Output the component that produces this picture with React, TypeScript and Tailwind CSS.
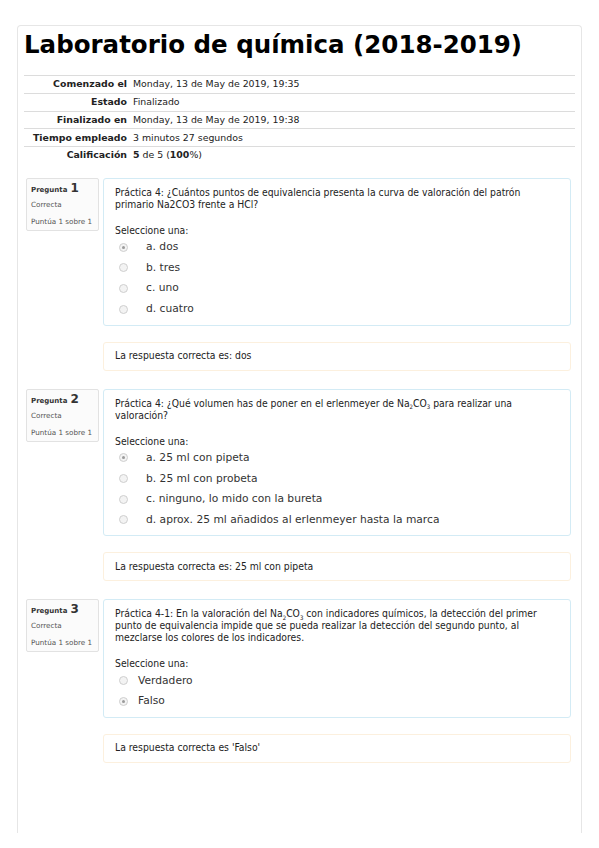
import type { ReactNode } from "react";

type Option = { label: string; checked?: boolean };

interface QuestionData {
  number: number;
  text: ReactNode;
  options: Option[];
  optionGap: string;
  feedback: string;
}

const SUMMARY: { label: string; value: ReactNode }[] = [
  { label: "Comenzado el", value: "Monday, 13 de May de 2019, 19:35" },
  { label: "Estado", value: "Finalizado" },
  { label: "Finalizado en", value: "Monday, 13 de May de 2019, 19:38" },
  { label: "Tiempo empleado", value: "3 minutos 27 segundos" },
  {
    label: "Calificación",
    value: (
      <>
        <b>5</b> de 5 (<b>100</b>%)
      </>
    ),
  },
];

const Na2CO3 = (
  <>
    Na<sub className="text-[6px] leading-none align-[-1px]">2</sub>CO
    <sub className="text-[6px] leading-none align-[-1px]">3</sub>
  </>
);

const QUESTIONS: QuestionData[] = [
  {
    number: 1,
    text: "Práctica 4: ¿Cuántos puntos de equivalencia presenta la curva de valoración del patrón primario Na2CO3 frente a HCl?",
    options: [{ label: "a. dos", checked: true }, { label: "b. tres" }, { label: "c. uno" }, { label: "d. cuatro" }],
    optionGap: "gap-[18px]",
    feedback: "La respuesta correcta es: dos",
  },
  {
    number: 2,
    text: (
      <>
        Práctica 4: ¿Qué volumen has de poner en el erlenmeyer de {Na2CO3} para realizar una valoración?
      </>
    ),
    options: [
      { label: "a. 25 ml con pipeta", checked: true },
      { label: "b. 25 ml con probeta" },
      { label: "c. ninguno, lo mido con la bureta" },
      { label: "d. aprox. 25 ml añadidos al erlenmeyer hasta la marca" },
    ],
    optionGap: "gap-[18px]",
    feedback: "La respuesta correcta es: 25 ml con pipeta",
  },
  {
    number: 3,
    text: (
      <>
        Práctica 4-1: En la valoración del {Na2CO3} con indicadores químicos, la detección del primer punto de
        equivalencia impide que se pueda realizar la detección del segundo punto, al mezclarse los colores de los
        indicadores.
      </>
    ),
    options: [{ label: "Verdadero" }, { label: "Falso", checked: true }],
    optionGap: "gap-[10px]",
    feedback: "La respuesta correcta es 'Falso'",
  },
];

const condensed = "[font-family:'DejaVu_Sans_Condensed','DejaVu_Sans',sans-serif]";

function Radio({ checked }: { checked?: boolean }) {
  return (
    <span className="flex h-[9px] w-[9px] shrink-0 items-center justify-center rounded-full border border-[#cfcfcf] bg-[#f3f3f3]">
      {checked && <span className="h-[3px] w-[3px] rounded-full bg-[#9a9a9a]" />}
    </span>
  );
}

function Question({ q }: { q: QuestionData }) {
  return (
    <div className="flex gap-[4px] pl-[2px] pr-[4px]">
      <div className="h-[53px] w-[73px] shrink-0 self-start rounded-[2px] border border-[#e2e2e2] bg-[#fbfbfb] pl-[4px] pt-[2px] text-[#333]">
        <div className="flex items-baseline gap-[3px] leading-[15px]">
          <span className="text-[7px] font-bold">Pregunta</span>
          <span className="text-[12px] font-bold">{q.number}</span>
        </div>
        <div className="mt-[1px] text-[7.2px] leading-[12px] text-[#555]">Correcta</div>
        <div className="mt-[5px] text-[7.2px] leading-[12px] text-[#555]">Puntúa 1 sobre 1</div>
      </div>
      <div className="min-w-0 flex-1">
        <div className="rounded-[3px] border border-[#d3ebf5] bg-white pb-[5px] pl-[11px] pr-[12px] pt-[7px] text-[#222]">
          <div className={`text-[10.3px] leading-[12px] ${condensed}`}>{q.text}</div>
          <div className={`mt-[14px] text-[10.3px] leading-[12px] ${condensed}`}>Seleccione una:</div>
          <div className="mt-[1px] flex flex-col">
            {q.options.map((o) => (
              <div key={o.label} className={`flex h-[20.7px] items-center pl-[4px] ${q.optionGap}`}>
                <Radio checked={o.checked} />
                <span className="text-[10.7px] text-[#333]">{o.label}</span>
              </div>
            ))}
          </div>
        </div>
        <div
          className={`mb-[18px] mt-[16px] flex h-[29px] items-center rounded-[3px] border border-[#fcf0de] bg-white pl-[11px] text-[10.3px] text-[#222] ${condensed}`}
        >
          {q.feedback}
        </div>
      </div>
    </div>
  );
}

export default function App() {
  return (
    <div className="min-h-[848px] bg-white px-[17px] pt-[25px] [font-family:'DejaVu_Sans',Verdana,sans-serif]">
      <div className="h-[808px] rounded-t-[4px] border border-b-0 border-[#e6e6e6] px-[6px] pt-[4px]">
        <h1 className="text-[24.5px] font-bold leading-[29px] text-black">Laboratorio de química (2018-2019)</h1>
        <div className="mt-[16px] text-[9.4px] text-[#222]">
          {SUMMARY.map((row) => (
            <div key={row.label} className="flex h-[17.75px] items-center border-t border-[#dcdcdc]">
              <div className="w-[108px] shrink-0 pr-[5px] text-right font-bold">{row.label}</div>
              <div className="pl-[1px]">{row.value}</div>
            </div>
          ))}
        </div>
        <div className="mt-[14px]">
          {QUESTIONS.map((q) => (
            <Question key={q.number} q={q} />
          ))}
        </div>
      </div>
    </div>
  );
}
